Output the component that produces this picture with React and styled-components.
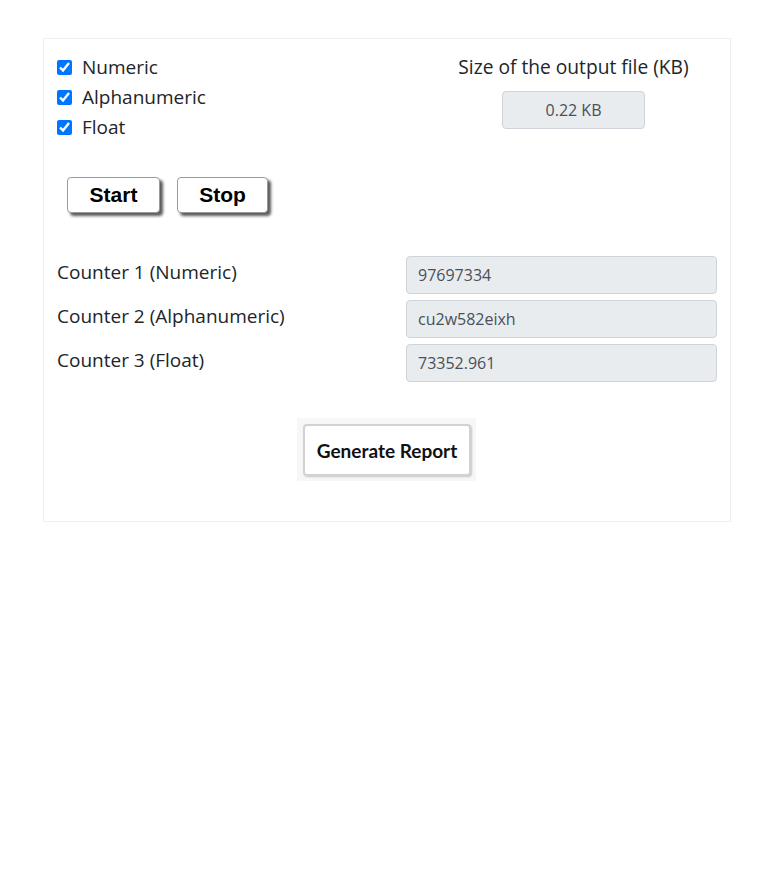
import React from "react";
import styled, { createGlobalStyle } from "styled-components";

const Global = createGlobalStyle`
  html, body { margin: 0; padding: 0; background: #fff; }
  body { font-family: "Open Sans", "Noto Sans", sans-serif; color: #212529; }
  * { box-sizing: border-box; }
`;

const Card = styled.div`
  margin: 38px 0 0 43px;
  width: 688px;
  border: 1px solid #f1eeee;
  padding: 13px 13px 40px 12px;
`;

const TopRow = styled.div`
  display: grid;
  grid-template-columns: 1fr 313px;
  margin-right: -13px;
`;

const CheckList = styled.div`
  display: flex;
  flex-direction: column;
`;

const CheckRow = styled.label`
  display: flex;
  align-items: center;
  height: 30px;
  font-size: 19px;
  gap: 10px;
  padding-left: 1px;
`;

const Check = styled.input`
  width: 15px;
  height: 15px;
  margin: 0;
  accent-color: #0075ff;
`;

const SizeBlock = styled.div`
  display: flex;
  flex-direction: column;
  align-items: center;
`;

const SizeTitle = styled.div`
  font-size: 19.2px;
  line-height: 30px;
`;

const SizeBox = styled.div`
  margin-top: 9px;
  width: 143px;
  height: 38px;
  display: flex;
  align-items: center;
  justify-content: center;
  background: #e9ecef;
  border: 1px solid #ced4da;
  border-radius: 4px;
  font-size: 16px;
  color: #495057;
`;

const ButtonRow = styled.div`
  display: flex;
  gap: 17px;
  margin-top: 35px;
  padding-left: 11px;
`;

const PushButton = styled.button`
  width: ${(p) => p.$w}px;
  height: 36px;
  background: #fff;
  border: 1px solid #9a9a9a;
  border-radius: 4px;
  box-shadow: 3px 3px 3px rgba(0, 0, 0, 0.65);
  font-family: "Liberation Sans", Arial, sans-serif;
  font-weight: 700;
  font-size: 21px;
  color: #000;
  padding: 0;
  cursor: pointer;
`;

const CounterGrid = styled.div`
  display: grid;
  grid-template-columns: 1fr 311px;
  row-gap: 6px;
  column-gap: 12px;
  margin-top: 43px;
`;

const CounterLabel = styled.div`
  font-size: 19px;
  line-height: 32px;
  padding-left: 1px;
`;

const CounterValue = styled.div`
  height: 38px;
  display: flex;
  align-items: center;
  padding: 0 11px;
  background: #e9ecef;
  border: 1px solid #ced4da;
  border-radius: 4px;
  font-size: 16px;
  color: #495057;
`;

const ReportWrap = styled.div`
  margin: 36px auto 0;
  width: 179px;
  height: 63px;
  background: #f7f7f7;
  padding: 6px 5px 5px 6px;
`;

const ReportButton = styled.button`
  width: 168px;
  height: 52px;
  background: #fff;
  border: 2px solid #d2d2d2;
  border-radius: 4px;
  box-shadow: 1px 1px 2px rgba(0, 0, 0, 0.2);
  font-family: Lato, "Open Sans", sans-serif;
  font-weight: 700;
  font-size: 19px;
  color: #111;
  padding: 0;
  cursor: pointer;
`;

const checks = ["Numeric", "Alphanumeric", "Float"];
const counters = [
  ["Counter 1 (Numeric)", "97697334"],
  ["Counter 2 (Alphanumeric)", "cu2w582eixh"],
  ["Counter 3 (Float)", "73352.961"],
];

export default function App() {
  return (
    <>
      <Global />
      <Card>
        <TopRow>
          <CheckList>
            {checks.map((c) => (
              <CheckRow key={c}>
                <Check type="checkbox" defaultChecked />
                {c}
              </CheckRow>
            ))}
          </CheckList>
          <SizeBlock>
            <SizeTitle>Size of the output file (KB)</SizeTitle>
            <SizeBox>0.22 KB</SizeBox>
          </SizeBlock>
        </TopRow>
        <ButtonRow>
          <PushButton $w={93}>Start</PushButton>
          <PushButton $w={91}>Stop</PushButton>
        </ButtonRow>
        <CounterGrid>
          {counters.map(([l, v]) => (
            <React.Fragment key={l}>
              <CounterLabel>{l}</CounterLabel>
              <CounterValue>{v}</CounterValue>
            </React.Fragment>
          ))}
        </CounterGrid>
        <ReportWrap>
          <ReportButton>Generate Report</ReportButton>
        </ReportWrap>
      </Card>
    </>
  );
}
